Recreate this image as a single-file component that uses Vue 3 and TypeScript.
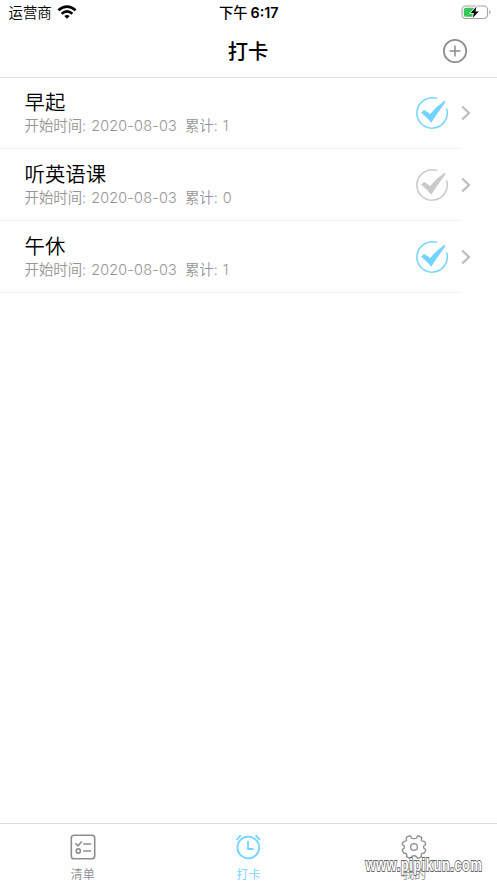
<script setup lang="ts">
interface Habit {
  name: string
  start: string
  total: number
  done: boolean
}

const habits: Habit[] = [
  { name: '早起', start: '2020-08-03', total: 1, done: true },
  { name: '听英语课', start: '2020-08-03', total: 0, done: false },
  { name: '午休', start: '2020-08-03', total: 1, done: true },
]
</script>

<template>
  <div class="screen">
    <header>
      <div class="status">
        <div class="carrier">
          <span>运营商</span>
          <svg width="20" height="15" viewBox="0 0 20 15" fill="none" stroke="#000" stroke-width="2.7">
            <path d="M1.4 5.2Q10-2 18.6 5.2" />
            <path d="M4.6 8.7Q10 4.2 15.4 8.7" />
            <path d="M7.3 11Q10 9 12.7 11L10 13.8Z" fill="#000" stroke="none" />
          </svg>
        </div>
        <div class="time"><span>下午</span><span class="digits">6:17</span></div>
        <svg class="battery" width="30" height="15" viewBox="0 0 30 15">
          <rect x="1" y="1" width="25.5" height="12.5" rx="3.7" fill="#fff" stroke="#a2a2a2" stroke-width="1.1" />
          <path d="M28.3 5.2Q29.6 5.8 29.6 7.3T28.3 9.4Z" fill="#a2a2a2" />
          <rect x="2.8" y="2.7" width="11.2" height="9.1" rx="2" fill="#34c759" />
          <path d="M15.6 1.6L9.6 8H13L11.6 12.9L17.8 6.4H14.4Z" fill="#000" stroke="#fff" stroke-width="1.5" paint-order="stroke" />
        </svg>
      </div>
      <div class="nav">
        <h1>打卡</h1>
        <svg class="add" width="26" height="26" viewBox="0 0 26 26" fill="none" stroke="#8c8c8c">
          <circle cx="13" cy="13" r="11.2" stroke-width="1.7" />
          <path d="M7.6 13H18.4M13 7.6V18.4" stroke-width="1.5" />
        </svg>
      </div>
    </header>

    <main>
      <div v-for="habit in habits" :key="habit.name" class="row">
        <div class="info">
          <div class="name">{{ habit.name }}</div>
          <div class="meta">
            <span class="label">开始时间:</span>
            <span class="date">{{ habit.start }}</span>
            <span class="label">累计:</span>
            <span class="count">{{ habit.total }}</span>
          </div>
        </div>
        <svg class="check" :class="{ done: habit.done }" width="34" height="34" viewBox="0 0 34 34">
          <path d="M21.5 2.4A15.2 15.2 0 1 0 31.8 13.1" fill="none" stroke="currentColor" stroke-width="1.5" stroke-linecap="round" />
          <path d="M6.2 16.8L9.1 13.8L15.2 17.9Q21.5 10.2 29.6 4.8L30.6 6Q23.1 16 16.2 26.8Q12 21.4 6.2 16.8Z" fill="currentColor" />
        </svg>
        <svg class="arrow" width="10" height="16" viewBox="0 0 10 16" fill="none" stroke="#bdbdbd" stroke-width="2.2">
          <path d="M1.2 1.5L8 8L1.2 14.5" />
        </svg>
      </div>
    </main>

    <nav class="tabs">
      <div class="tab">
        <svg width="26" height="26" viewBox="0 0 26 26" fill="none" stroke="currentColor" stroke-width="1.6">
          <rect x="1.3" y="1.3" width="23.4" height="23.4" rx="2.8" />
          <path d="M5.4 9.4L8 11.8L11.8 7.4M13.2 10H21.2M13.2 17H21.2" />
          <circle cx="8.3" cy="17" r="2.1" />
        </svg>
        <span>清单</span>
      </div>
      <div class="tab active">
        <svg width="26" height="26" viewBox="0 0 26 26" fill="none" stroke="currentColor" stroke-width="1.8">
          <circle cx="13.3" cy="13.5" r="10.9" />
          <path d="M13 7V15H18.6M1.5 5.9L5.8 1.3M20.6 1.3L24.9 5.9" />
        </svg>
        <span>打卡</span>
      </div>
      <div class="tab">
        <svg width="26" height="26" viewBox="0 0 26 26" fill="none" stroke="currentColor" stroke-width="1.3">
          <path d="M10.2 4Q10.4 2.2 8.8 1.7L5.4 3.3Q4.8 4.6 5.7 6Q5 7.6 3.1 7.4Q1.7 7.7 1.2 10.2Q1.6 11.1 3 11.6Q3.8 13 3 14.3Q1.6 14.8 1.2 15.9L2.6 19Q4.4 19.3 5.6 19.8Q6.2 21 5.4 22.6L8.8 24.4Q10.4 23.7 11 22.2Q13 21.3 15 22.2Q15.6 23.7 17.2 24.4L20.6 22.6Q19.8 21 20.4 19.8Q21.6 19.3 23.4 19L24.8 15.9Q24.4 14.8 23 14.3Q22.2 13 23 11.6Q24.4 11.1 24.8 10.2Q24.3 7.7 22.9 7.4Q21 7.6 20.3 6Q21.2 4.6 20.6 3.3L17.2 1.7Q15.6 2.2 15.8 4Q13 5.4 10.2 4Z" />
          <circle cx="13" cy="13" r="3.4" />
        </svg>
        <span>我的</span>
      </div>
      <svg class="watermark" width="121" height="34" viewBox="0 0 121 34">
        <text x="2.5" y="22" textLength="117" lengthAdjust="spacingAndGlyphs">www.pipikun.com</text>
      </svg>
    </nav>
  </div>
</template>

<style>
body {
  margin: 0;
  background: #fff;
}
</style>

<style scoped>
.screen {
  display: flex;
  flex-direction: column;
  box-sizing: border-box;
  width: 100%;
  height: 883px;
  overflow: hidden;
  background: #fefefe;
  color: #000;
  font-family: Inter, "Noto Sans CJK SC", sans-serif;
}
svg {
  display: block;
  flex: none;
}
header {
  box-sizing: border-box;
  height: 78px;
  border-bottom: 1px solid #dedede;
}
.status {
  display: grid;
  grid-template-columns: 1fr auto 1fr;
  align-items: center;
  height: 25px;
  padding: 0 6px 0 8.5px;
  font-size: 14.4px;
  line-height: 24px;
}
.carrier {
  display: flex;
  align-items: center;
  gap: 5px;
  font-weight: 350;
}
.carrier svg {
  margin-top: -1px;
}
.time {
  display: flex;
  gap: 3px;
  margin-right: 2px;
  font-size: 14.3px;
  font-weight: 500;
}
.digits {
  font-weight: 600;
}
.battery {
  justify-self: end;
  margin-top: -1px;
}
.nav {
  display: grid;
  grid-template-columns: 1fr auto 1fr;
  align-items: center;
  height: 52px;
  padding-right: 29.5px;
  padding-left: 28.5px;
}
h1 {
  grid-column: 2;
  margin: 0;
  padding-top: 1px;
  font-size: 20.3px;
  font-weight: 500;
  line-height: 30px;
}
.add {
  justify-self: end;
}
.row {
  display: flex;
  align-items: center;
  box-sizing: border-box;
  width: 460px;
  height: 72px;
  padding-left: 24.5px;
  border-bottom: 1px solid #f1f1f1;
}
.row:first-child {
  height: 71px;
}
.info {
  flex: 1;
  padding-top: 1px;
}
.name {
  height: 25px;
  font-size: 20.4px;
  font-weight: 350;
  line-height: 25px;
}
.meta {
  display: flex;
  height: 22px;
  color: #959595;
  font-size: 14.4px;
  font-weight: 350;
  line-height: 22px;
  white-space: nowrap;
}
.date {
  margin: 0 8px 0 5px;
  letter-spacing: 0.2px;
}
.count {
  margin-left: 5px;
}
.check {
  margin-right: 12px;
  color: #c9c9c9;
}
.check.done {
  color: #73d5ff;
}
.arrow {
  margin-right: -11px;
}
.tabs {
  position: relative;
  display: grid;
  grid-template-columns: repeat(3, 1fr);
  box-sizing: border-box;
  height: 60px;
  margin-top: auto;
  padding-top: 10px;
  border-top: 1px solid #dedede;
}
.tab {
  display: flex;
  flex-direction: column;
  align-items: center;
  gap: 5px;
  color: #8e8e8e;
  font-size: 12px;
  font-weight: 350;
  line-height: 20px;
}
.tab.active {
  color: #73d5ff;
}
.watermark {
  position: absolute;
  top: 25px;
  right: 13px;
  overflow: visible;
}
.watermark text {
  fill: #fff;
  stroke: #666;
  stroke-width: 1.8px;
  paint-order: stroke;
  font-family: "Liberation Sans", sans-serif;
  font-size: 19px;
  font-weight: 700;
  letter-spacing: 0.8px;
}
</style>
